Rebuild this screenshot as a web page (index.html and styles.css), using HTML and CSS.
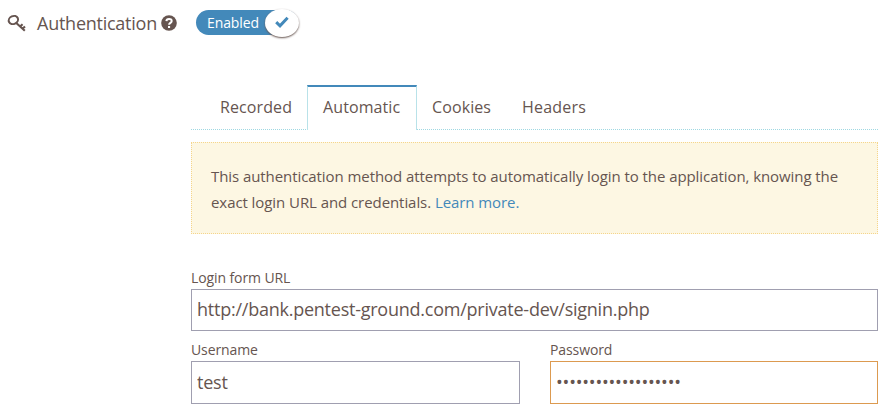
FILE: index.html
```
<!DOCTYPE html>
<html lang="en">
<head>
<meta charset="utf-8">
<title>Authentication</title>
<link rel="stylesheet" href="styles.css">
</head>
<body>
<header class="heading">
  <svg class="key" viewBox="0 0 20 20" fill="none" stroke="currentColor"><ellipse cx="6.4" cy="6" rx="4.8" ry="3.9" stroke-width="2" transform="rotate(-25 6.4 6)"/><path d="M9 8.8 17.8 16.8M13 12.6 15.6 10.2M15.4 14.8 18 12.4" stroke-width="2.1"/></svg>
  <h1 class="title">Authentication</h1>
  <svg class="help" viewBox="0 0 16 16"><circle cx="8" cy="8" r="7.8" fill="currentColor"/><path d="M5.4 6.1C5.5 3.2 10.7 3.2 10.7 6c0 1.9-2.6 1.8-2.6 3.8" fill="none" stroke="#fff" stroke-width="2"/><path d="M7 11h2.1v2H7z" fill="#fff"/></svg>
  <div class="switch"><span class="switch-label">Enabled</span><span class="knob"><svg viewBox="0 0 14 12"><path d="M1.2 6.2 5 9.8 12.6 1.8" fill="none" stroke="currentColor" stroke-width="3"/></svg></span></div>
</header>
<main class="panel">
  <nav class="tabs">
    <a class="tab">Recorded</a><a class="tab active">Automatic</a><a class="tab">Cookies</a><a class="tab">Headers</a>
  </nav>
  <div class="notice">This authentication method attempts to automatically login to the application, knowing the<br>exact login URL and credentials. <a class="link">Learn more.</a></div>
  <form class="form">
    <div class="field wide"><label class="label" for="url">Login form URL</label><input class="input" id="url" type="text" value="http://bank.pentest-ground.com/private-dev/signin.php"></div>
    <div class="field"><label class="label" for="user">Username</label><input class="input tall" id="user" type="text" value="test"></div>
    <div class="field"><label class="label" for="pass">Password</label><input class="input tall warn" id="pass" type="password" value="0123456789012345678"></div>
  </form>
</main>
</body>
</html>
```
FILE: styles.css
```
* { box-sizing: border-box; }
body { margin: 0; background: #fff; color: #665550; font-family: "Open Sans", sans-serif; overflow: hidden; }
.heading { display: flex; align-items: center; height: 46px; padding-left: 7px; }
.key { width: 20px; height: 20px; margin-top: 2px; }
.title { width: 120px; margin: 0 4px 0 10px; font-size: 18px; letter-spacing: -.25px; line-height: 24px; font-weight: 400; white-space: nowrap; }
.help { width: 16px; height: 16px; }
.switch { display: flex; align-items: center; justify-content: space-between; width: 102px; height: 25px; margin-left: 19px; margin-bottom: 1px; padding-left: 11px; border-radius: 13px; background: #4389ba; color: #fff; font-size: 14px; }
.switch-label { white-space: nowrap; letter-spacing: -.1px; font-weight: 500; }
.knob { display: flex; align-items: center; justify-content: center; width: 34px; height: 28px; margin-right: -1px; border-radius: 50%; background: #fff; color: #4389ba; box-shadow: 0 1px 2px #665550; flex: none; }
.knob svg { width: 14px; height: 12px; margin-top: -2px; }
.panel { width: 687px; margin: 39px 0 0 191px; }
.tabs { display: flex; height: 45px; padding-left: 14px; border-bottom: 1px dotted #9fd8e2; font-size: 16px; letter-spacing: .1px; line-height: 44px; }
.tab { padding: 0 15px; white-space: nowrap; }
.tab:first-child { width: 102px; }
.tab:last-child { padding-left: 16px; letter-spacing: .2px; }
.tab.active { width: 110px; height: 45px; border: 1px solid #b9e2e9; border-top: 2px solid #4389ba; border-bottom: 0; background: #fff; line-height: 41px; }
.notice { height: 92px; margin-top: 12px; padding: 20px 19px; border: 1px dotted #f5d58c; background: #fdf7e3; font-size: 15px; letter-spacing: -.07px; line-height: 26px; white-space: nowrap; }
.link { color: #4389ba; }
.form { display: grid; grid-template-columns: 329px 328px; column-gap: 30px; row-gap: 9px; margin-top: 34px; }
.field { display: flex; flex-direction: column; }
.wide { grid-column: 1 / -1; }
.label { height: 21px; font-size: 14px; letter-spacing: -.1px; line-height: 20px; white-space: nowrap; }
.input { width: 100%; height: 42px; margin: 0; padding: 0 5px 2px; border: 1px solid #a09fb0; border-radius: 0; background: #fff; color: inherit; font: 18px "Open Sans", sans-serif; letter-spacing: -.24px; outline: 0; }
.tall { height: 43px; }
.warn { border-color: #dc9a50; letter-spacing: -.2px; }
```
